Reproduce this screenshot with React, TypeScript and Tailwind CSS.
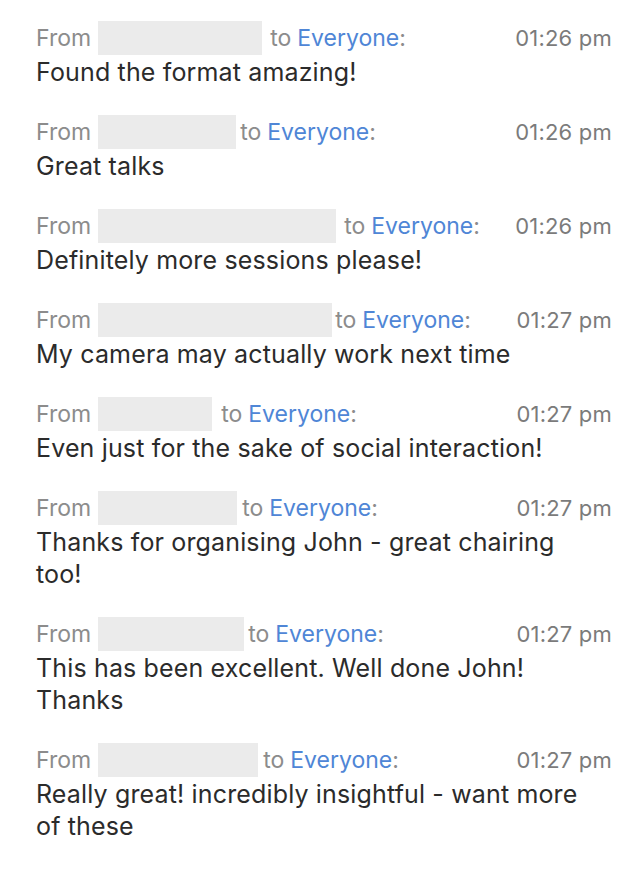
const messages = [
  { box: 164, gap: 8, time: "01:26 pm", text: "Found the format amazing!" },
  { box: 138, gap: 4, time: "01:26 pm", text: "Great talks" },
  { box: 238, gap: 8, time: "01:26 pm", text: "Definitely more sessions please!" },
  { box: 234, gap: 3, time: "01:27 pm", text: "My camera may actually work next time" },
  { box: 114, gap: 9, time: "01:27 pm", text: "Even just for the sake of social interaction!" },
  { box: 139, gap: 5, time: "01:27 pm", text: "Thanks for organising John - great chairing too!" },
  { box: 146, gap: 4, time: "01:27 pm", text: "This has been excellent. Well done John! Thanks" },
  { box: 160, gap: 5, time: "01:27 pm", text: "Really great! incredibly insightful - want more of these" },
]

export default function App() {
  return (
    <div className="min-h-[896px] w-[621px] bg-white pt-5 pl-9 pr-[9px] font-['Inter',sans-serif]">
      {messages.map((m, i) => (
        <div key={i} className="mb-[26px]">
          <div className="flex h-9 items-center text-[23px] text-[#8c8c8c]">
            <span>From</span>
            <span className="ml-[7px] h-[34px] bg-[#ebebeb]" style={{ width: m.box, marginRight: m.gap }} />
            <span>to</span>
            <span className="ml-1.5 text-[#4f86d6]">Everyone</span>
            <span>:</span>
            <span className="ml-auto text-[22px] tracking-[0.2px] text-[#7b7b7b]">{m.time}</span>
          </div>
          <p className="max-w-[566px] text-[25px] leading-8 tracking-[0.15px] text-[#2b2b2b]">{m.text}</p>
        </div>
      ))}
    </div>
  )
}
